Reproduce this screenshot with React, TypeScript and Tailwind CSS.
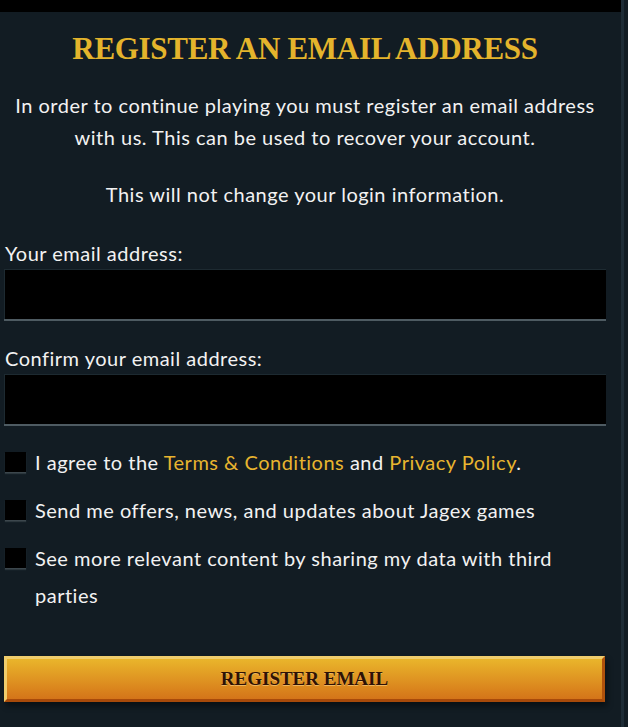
import { useState } from "react";

// Email registration panel
export default function App() {
  const [email, setEmail] = useState("");
  const [confirm, setConfirm] = useState("");
  const [terms, setTerms] = useState(false);
  const [offers, setOffers] = useState(false);
  const [share, setShare] = useState(false);

  const body = { fontFamily: '"Lato", "Open Sans", sans-serif' };
  const serif = { fontFamily: '"Liberation Serif", "DejaVu Serif", serif' };

  const inputCls =
    "block w-[602px] h-[52px] ml-[4px] bg-black text-white px-3 outline-none border-b-2 border-[#4e5b62] shadow-[inset_1px_1px_0_#1d2a31]";

  const Check = ({ on, set }: { on: boolean; set: (v: boolean) => void }) => (
    <button
      type="button"
      onClick={() => set(!on)}
      className="shrink-0 w-[21px] h-[21px] bg-black border-b border-[#3c474d] shadow-[0_1px_1px_#2c373d] mt-[8px] flex items-center justify-center text-[#e8b52f] text-sm"
    >
      {on ? "✓" : ""}
    </button>
  );

  return (
    <div className="flex w-[628px] min-h-[727px] bg-[#121c23] text-[#f2f2f2] text-[20px] tracking-[0.5px]" style={body}>
      <div className="w-[621px] flex flex-col">
        {/* top bar */}
        <div className="h-[12px] bg-black" />

        <div className="w-[610px]">
          <h1
            className="mt-[19px] text-center text-[31px] leading-[36px] font-bold text-[#e4b42c] tracking-[-0.3px]"
            style={serif}
          >
            REGISTER AN EMAIL ADDRESS
          </h1>

          <p className="mt-[22px] text-center leading-[32px]">
            In order to continue playing you must register an email address
            <br />
            with us. This can be used to recover your account.
          </p>

          <p className="mt-[25px] text-center leading-[32px]">
            This will not change your login information.
          </p>
        </div>

        {/* email fields */}
        <label className="mt-[27px] pl-[5px] leading-[32px]">Your email address:</label>
        <input className={inputCls} value={email} onChange={(e) => setEmail(e.target.value)} />

        <label className="mt-[21px] pl-[5px] leading-[32px]">Confirm your email address:</label>
        <input className={inputCls} value={confirm} onChange={(e) => setConfirm(e.target.value)} />

        {/* checkboxes */}
        <div className="mt-[18px] pl-[5px] pr-[40px] flex flex-col gap-[11px] leading-[37px]">
          <div className="flex gap-[9px]">
            <Check on={terms} set={setTerms} />
            <span>
              I agree to the <a className="text-[#e8b52f] cursor-pointer">Terms &amp; Conditions</a> and{" "}
              <a className="text-[#e8b52f] cursor-pointer">Privacy Policy</a>.
            </span>
          </div>
          <div className="flex gap-[9px]">
            <Check on={offers} set={setOffers} />
            <span>Send me offers, news, and updates about Jagex games</span>
          </div>
          <div className="flex gap-[9px]">
            <Check on={share} set={setShare} />
            <span>See more relevant content by sharing my data with third parties</span>
          </div>
        </div>

        {/* submit */}
        <button
          type="button"
          className="mt-[42px] ml-[4px] w-[601px] h-[46px] bg-gradient-to-b from-[#e9b52b] to-[#d47419] border-[3px] border-t-[#f0cd6c] border-l-[#f0cd6c] border-r-[#b0520c] border-b-[#a84a0a] shadow-[2px_4px_6px_rgba(0,0,0,0.45)] text-[19px] font-bold tracking-[0px] text-[#2e1206] [text-shadow:0_1px_0_rgba(255,220,150,0.55)]"
          style={serif}
        >
          REGISTER EMAIL
        </button>
      </div>

      {/* right edge */}
      <div className="w-[3px] bg-[#1e2c36]" />
      <div className="flex-1 bg-[#121c23]" />
    </div>
  );
}
